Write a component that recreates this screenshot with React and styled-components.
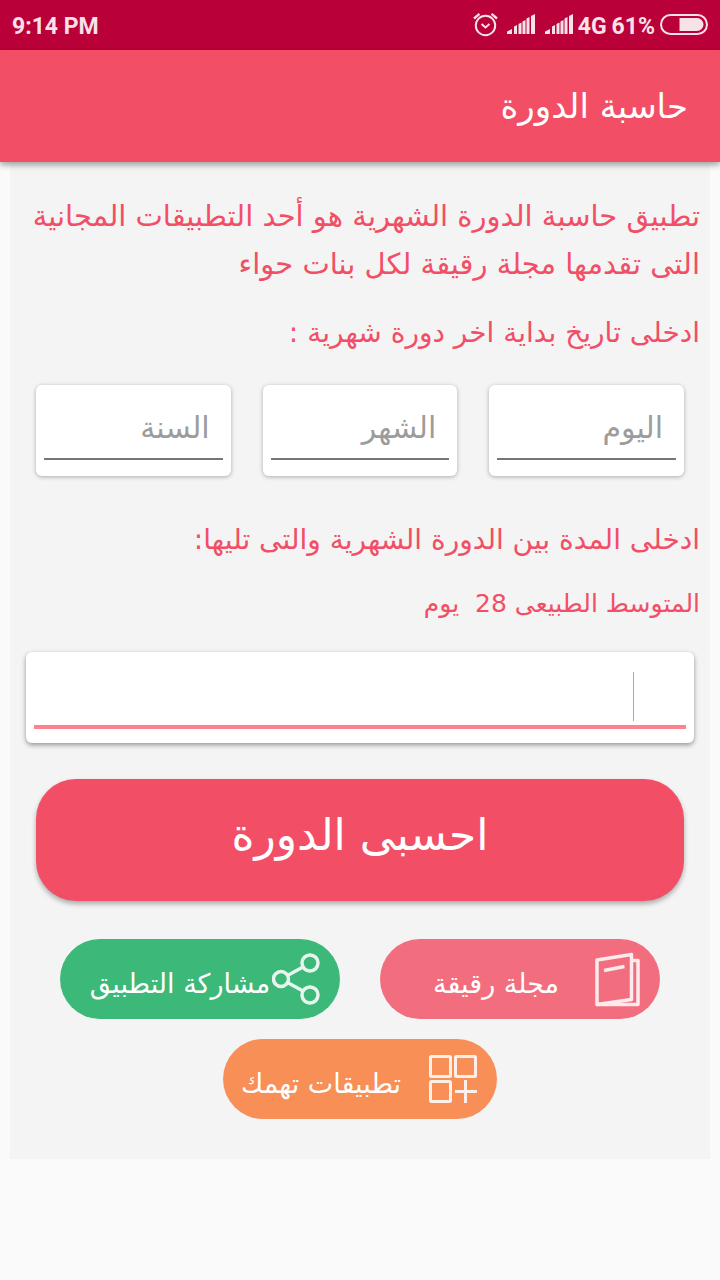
import React, { useState } from 'react'
import styled, { createGlobalStyle } from 'styled-components'

const GlobalStyle = createGlobalStyle`
    * {
        box-sizing: border-box;
    }

    body {
        margin: 0;
        background: #fafafa;
        font-family: 'DejaVu Sans', 'Noto Sans', sans-serif;
    }
`

const StatusBar = styled.div`
    height: 50px;
    padding: 2px 12px 0;
    display: flex;
    align-items: center;
    justify-content: space-between;
    background: #ba0038;
    color: #f8e2e9;
    font-family: Roboto, sans-serif;
    font-size: 23px;
    font-weight: 700;
`

const StatusIcons = styled.div`
    display: flex;
    align-items: center;
    gap: 5px;

    svg {
        display: block;
        margin-bottom: 4px;
    }
`

const SignalGroup = styled.div`
    display: flex;
    gap: 10px;
    margin-left: 4px;
`

const AppBar = styled.header`
    position: relative;
    height: 112px;
    padding: 0 32px;
    display: flex;
    align-items: center;
    background: #f24e66;
    box-shadow: 0 3px 6px rgba(0, 0, 0, 0.35);
`

const Title = styled.h1`
    margin: 0;
    color: white;
    font-size: 34px;
    font-weight: 400;
`

const Main = styled.main`
    margin: 0 10px;
    padding: 30px 0 40px;
    background: #f4f4f4;
`

const Text = styled.p`
    margin: 0;
    padding: 0 10px;
    color: #f24e66;
    font-size: 29px;
    line-height: 48px;
`

const Question = styled(Text).attrs({ as: 'h2' })`
    margin-top: ${({ $space }) => $space}px;
    font-size: 28px;
    font-weight: 400;
`

const Hint = styled(Text)`
    margin-top: 16px;
    font-size: 25px;
`

const DateFields = styled.div`
    display: flex;
    gap: 32px;
    margin: 28px 26px 0;
`

const FieldCard = styled.label`
    position: relative;
    display: block;
    flex: 1;
    min-width: 0;
    padding: 8px 8px 16px;
    background: white;
    border-radius: 6px;
    box-shadow: 0 1px 4px rgba(0, 0, 0, 0.3);
`

const PeriodCard = styled(FieldCard)`
    margin: 24px 16px 0;
    padding-bottom: 14px;
    box-shadow: 0 2px 5px rgba(0, 0, 0, 0.4);
`

const Input = styled.input`
    display: block;
    width: 100%;
    height: ${({ $active }) => ($active ? 69 : 67)}px;
    padding: 4px 13px 0;
    border: 0;
    border-bottom: ${({ $active }) => ($active ? '4px solid #ff808f' : '2px solid #757575')};
    outline: none;
    background: transparent;
    color: #333;
    font-family: inherit;
    font-size: 30px;

    &::placeholder {
        color: #9c9c9c;
        opacity: 1;
    }
`

const Caret = styled.span`
    position: absolute;
    top: 20px;
    right: 60px;
    width: 1px;
    height: 49px;
    background: #ff808f;
`

const CalculateButton = styled.button`
    display: block;
    width: calc(100% - 52px);
    height: 122px;
    margin: 36px 26px 0;
    padding: 0 0 12px;
    border: 0;
    border-radius: 40px;
    background: #f24e66;
    box-shadow: 0 3px 5px rgba(0, 0, 0, 0.3);
    color: white;
    font-family: inherit;
    font-size: 44px;
`

const Actions = styled.div`
    display: flex;
    flex-wrap: wrap;
    justify-content: center;
    gap: 20px 40px;
    margin: 38px 26px 0;
`

const ActionButton = styled.button`
    display: flex;
    align-items: center;
    gap: ${({ $gap = 0 }) => $gap}px;
    width: ${({ $width }) => $width}px;
    height: 80px;
    padding: 0 20px 0 ${({ $end }) => $end}px;
    border: 0;
    border-radius: 40px;
    background: ${({ $color }) => $color};
    color: white;
    font-family: inherit;
    font-size: 27px;
    white-space: nowrap;

    svg {
        flex: none;
    }
`

const ActionLabel = styled.span`
    flex: 1;
    padding-top: 8px;
    text-align: center;
`

const AlarmIcon = () => (
    <svg width="25" height="25" viewBox="0 0 25 25" fill="none" stroke="#f8e2e9" strokeWidth="2">
        <circle cx="12.5" cy="13.5" r="9.7" />
        <path d="M1 6.5 6.5 1.8M24 6.5l-5.5-4.7" strokeWidth="2.4" />
        <path d="m8.5 12 4 3.5 4-3.5" />
    </svg>
)

const SignalIcon = () => (
    <svg width="28" height="20" viewBox="0 0 28 20" fill="#f8e2e9">
        <path d="M0 20v-2.5L5 15v5zM7 12.5l3-1.5v9H7zM11.5 10l3-1.5V20h-3zM15.5 7.5l3-1.5v14h-3zM19.5 4.5l3-1.5v17h-3zM24 2l4-2v20h-4z" />
    </svg>
)

const BatteryIcon = () => (
    <svg width="48" height="21" viewBox="0 0 48 21">
        <rect x="1" y="1" width="46" height="19" rx="9.5" fill="none" stroke="#f8e2e9" strokeWidth="2" />
        <path d="M19.5 4H37a6.5 6.5 0 0 1 0 13H19.5z" fill="#f8e2e9" />
    </svg>
)

const BookIcon = () => (
    <svg
        width="48"
        height="56"
        viewBox="0 0 48 56"
        fill="none"
        stroke="#fdeaed"
        strokeWidth="3.5"
        strokeLinejoin="round"
    >
        <path d="M5 9 39.5 3.5v45L5 53.5z" />
        <path d="M39.5 9.5H46v44H5" />
        <path d="m12 19.5 20.5-4" />
    </svg>
)

const ShareIcon = () => (
    <svg width="48" height="52" viewBox="0 0 48 52" fill="none" stroke="#e6f6ee" strokeWidth="3.5">
        <circle cx="9" cy="26" r="7.5" />
        <circle cx="38" cy="10" r="8" />
        <circle cx="38" cy="42" r="8" />
        <path d="M15.5 22.5 31 14M15.5 29.5 31 38" />
    </svg>
)

const AppsIcon = () => (
    <svg width="48" height="48" viewBox="0 0 48 48" fill="none" stroke="#fef0e8" strokeWidth="3">
        <rect x="1.5" y="1.5" width="20" height="20" rx="1" />
        <rect x="26.5" y="1.5" width="20" height="20" rx="1" />
        <rect x="1.5" y="26.5" width="20" height="20" rx="1" />
        <path d="M36.5 25v23M26 36.5h22" />
    </svg>
)

const App = () => {
    const [length, setLength] = useState('')

    return (
        <>
            <GlobalStyle />
            <StatusBar>
                <span>9:14 PM</span>
                <StatusIcons>
                    <AlarmIcon />
                    <SignalGroup>
                        <SignalIcon />
                        <SignalIcon />
                    </SignalGroup>
                    <span>4G</span>
                    <span>61%</span>
                    <BatteryIcon />
                </StatusIcons>
            </StatusBar>
            <div dir="rtl" lang="ar">
                <AppBar>
                    <Title>حاسبة الدورة</Title>
                </AppBar>
                <Main>
                    <Text>
                        تطبيق حاسبة الدورة الشهرية هو أحد التطبيقات المجانية التى تقدمها مجلة رقيقة لكل بنات
                        حواء
                    </Text>
                    <Question $space={21}>ادخلى تاريخ بداية اخر دورة شهرية :</Question>
                    <DateFields>
                        <FieldCard>
                            <Input type="text" aria-label="اليوم" placeholder="اليوم" />
                        </FieldCard>
                        <FieldCard>
                            <Input type="text" aria-label="الشهر" placeholder="الشهر" />
                        </FieldCard>
                        <FieldCard>
                            <Input type="text" aria-label="السنة" placeholder="السنة" />
                        </FieldCard>
                    </DateFields>
                    <Question $space={40} id="length-label">
                        ادخلى المدة بين الدورة الشهرية والتى تليها:
                    </Question>
                    <Hint>المتوسط الطبيعى 28&nbsp; يوم</Hint>
                    <PeriodCard>
                        <Input
                            $active
                            type="text"
                            aria-labelledby="length-label"
                            value={length}
                            onChange={(e) => setLength(e.target.value)}
                        />
                        {length === '' && <Caret />}
                    </PeriodCard>
                    <CalculateButton type="button">احسبى الدورة</CalculateButton>
                    <Actions>
                        <ActionButton type="button" $color="#f26d7e" $width={280} $end={20}>
                            <BookIcon />
                            <ActionLabel>مجلة رقيقة</ActionLabel>
                        </ActionButton>
                        <ActionButton type="button" $color="#3cb878" $width={280} $end={28}>
                            <ShareIcon />
                            <ActionLabel>مشاركة التطبيق</ActionLabel>
                        </ActionButton>
                        <ActionButton type="button" $color="#f78f57" $width={274} $end={0} $gap={10}>
                            <AppsIcon />
                            <ActionLabel>تطبيقات تهمك</ActionLabel>
                        </ActionButton>
                    </Actions>
                </Main>
            </div>
        </>
    )
}

export default App
